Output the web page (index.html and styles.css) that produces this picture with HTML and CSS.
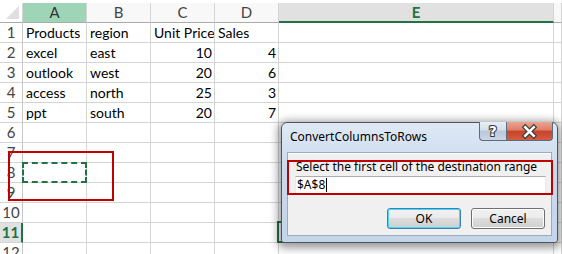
FILE: index.html
```html
<!DOCTYPE html>
<html lang="en">
<head>
  <meta charset="UTF-8">
  <title>ConvertColumnsToRows</title>
  <link rel="stylesheet" href="styles.css">
</head>
<body>
  <div class="sheet">
    <!-- Column headers -->
    <div class="row head-row">
      <div class="cell head corner"><div class="corner-mark"></div></div>
      <div class="cell head head-a">A</div>
      <div class="cell head">B</div>
      <div class="cell head">C</div>
      <div class="cell head">D</div>
      <div class="cell head head-active">E</div>
      <div class="cell head"></div>
    </div>

    <div class="row">
      <div class="cell rh">1</div>
      <div class="cell">Products</div>
      <div class="cell">region</div>
      <div class="cell">Unit Price</div>
      <div class="cell">Sales</div>
      <div class="cell"></div>
      <div class="cell"></div>
    </div>
    <div class="row">
      <div class="cell rh">2</div>
      <div class="cell">excel</div>
      <div class="cell">east</div>
      <div class="cell num">10</div>
      <div class="cell num">4</div>
      <div class="cell"></div>
      <div class="cell"></div>
    </div>
    <div class="row">
      <div class="cell rh">3</div>
      <div class="cell">outlook</div>
      <div class="cell">west</div>
      <div class="cell num">20</div>
      <div class="cell num">6</div>
      <div class="cell"></div>
      <div class="cell"></div>
    </div>
    <div class="row">
      <div class="cell rh">4</div>
      <div class="cell">access</div>
      <div class="cell">north</div>
      <div class="cell num">25</div>
      <div class="cell num">3</div>
      <div class="cell"></div>
      <div class="cell"></div>
    </div>
    <div class="row">
      <div class="cell rh">5</div>
      <div class="cell">ppt</div>
      <div class="cell">south</div>
      <div class="cell num">20</div>
      <div class="cell num">7</div>
      <div class="cell"></div>
      <div class="cell"></div>
    </div>
    <div class="row">
      <div class="cell rh">6</div>
      <div class="cell"></div><div class="cell"></div><div class="cell"></div>
      <div class="cell"></div><div class="cell"></div><div class="cell"></div>
    </div>
    <div class="row">
      <div class="cell rh">7</div>
      <div class="cell"></div><div class="cell"></div><div class="cell"></div>
      <div class="cell"></div><div class="cell"></div><div class="cell"></div>
    </div>
    <div class="row">
      <div class="cell rh">8</div>
      <div class="cell marked"><div class="marquee"></div></div>
      <div class="cell"></div><div class="cell"></div>
      <div class="cell"></div><div class="cell"></div><div class="cell"></div>
    </div>
    <div class="row">
      <div class="cell rh">9</div>
      <div class="cell"></div><div class="cell"></div><div class="cell"></div>
      <div class="cell"></div><div class="cell"></div><div class="cell"></div>
    </div>
    <div class="row">
      <div class="cell rh">10</div>
      <div class="cell"></div><div class="cell"></div><div class="cell"></div>
      <div class="cell"></div><div class="cell"></div><div class="cell"></div>
    </div>
    <div class="row">
      <div class="cell rh rh-active">11</div>
      <div class="cell"></div><div class="cell"></div><div class="cell"></div>
      <div class="cell"></div>
      <div class="cell marked"><div class="active-cell"></div></div>
      <div class="cell"></div>
    </div>
    <div class="row">
      <div class="cell rh">12</div>
      <div class="cell"></div><div class="cell"></div><div class="cell"></div>
      <div class="cell"></div><div class="cell"></div><div class="cell"></div>
    </div>

    <!-- highlight around the destination cell -->
    <div class="callout sheet-callout"></div>

    <!-- Dialog -->
    <div class="dialog">
      <div class="titlebar">
        <span class="title">ConvertColumnsToRows</span>
        <div class="caption-buttons">
          <div class="cap-btn help-btn">
            <svg width="27" height="19" viewBox="0 0 27 19">
              <text x="13.5" y="14.5" text-anchor="middle" class="help-glyph">?</text>
            </svg>
          </div>
          <div class="cap-btn close-btn">
            <svg width="47" height="19" viewBox="0 0 47 19">
              <path d="M19 5 L28 14 M28 5 L19 14" stroke="#3b3b3b" stroke-width="5" stroke-linecap="square"/>
              <path d="M19 5 L28 14 M28 5 L19 14" stroke="#ffffff" stroke-width="2.6" stroke-linecap="square"/>
            </svg>
          </div>
        </div>
      </div>
      <div class="client">
        <div class="field-label">Select the first cell of the destination range</div>
        <div class="textbox">$A$8<span class="caret"></span></div>
        <div class="dialog-buttons">
          <button class="btn btn-default">OK</button>
          <button class="btn">Cancel</button>
        </div>
      </div>
      <div class="callout dialog-callout"></div>
    </div>
  </div>
</body>
</html>
```

FILE: styles.css
```css
/* General */
body {
  margin: 0;
  background-color: #ffffff;
  font-family: 'Lato', 'Liberation Sans', sans-serif;
  overflow: hidden;
}

/* Sheet grid */
.sheet {
  position: relative;
  padding-top: 3px;
  height: 251px;
  overflow: hidden;
}

.row {
  display: grid;
  grid-template-columns: 23px 64px 64px 64px 64px 275px 1fr;
  height: 20px;
}

.head-row {
  height: 20px;
}

.cell {
  box-sizing: border-box;
  border-right: 1px solid #d4d4d4;
  border-bottom: 1px solid #d4d4d4;
  padding: 0 2px 0 3px;
  font-size: 14px;
  line-height: 19px;
  color: #000;
  white-space: nowrap;
  overflow: hidden;
}

.num {
  text-align: right;
}

.marked {
  position: relative;
  overflow: visible;
}

/* Column headers */
.head {
  background-color: #f8f8f8;
  border-bottom-color: #ababab;
  color: #444;
  font-size: 15px;
  text-align: center;
  padding: 0;
}

.corner {
  background-color: #fff;
  display: flex;
  align-items: flex-end;
  justify-content: flex-end;
  padding: 0 3px 3px 0;
}

.corner-mark {
  width: 13px;
  height: 13px;
  background-color: #dfdfdf;
  clip-path: polygon(100% 0, 100% 100%, 0 100%);
}

.head-a {
  background-color: #9fd5b7;
  color: #333;
}

.head-active {
  background-color: #e1e1e1;
  color: #217346;
  font-weight: bold;
  border-bottom: 2px solid #217346;
  line-height: 18px;
}

/* Row headers */
.rh {
  text-align: center;
  color: #444;
  font-size: 15px;
  padding: 0;
  border-right-color: #c6c6c6;
}

.rh-active {
  background-color: #e1e1e1;
  color: #217346;
  font-weight: bold;
  border-right: 2px solid #217346;
}

/* Copy marquee and active cell */
.marquee {
  position: absolute;
  left: -1px;
  top: -1px;
  right: -1px;
  bottom: -1px;
  border: 2px dashed #217346;
}

.active-cell {
  position: absolute;
  left: -2px;
  top: -2px;
  right: -1px;
  bottom: -1px;
  border: 2px solid #217346;
}

/* Red highlight boxes */
.callout {
  position: absolute;
  box-sizing: border-box;
  border: 2px solid #c00000;
}

.sheet-callout {
  left: 8px;
  top: 151px;
  width: 106px;
  height: 50px;
}

/* Dialog window */
.dialog {
  position: absolute;
  left: 281px;
  top: 122px;
  width: 277px;
  height: 121px;
  box-sizing: border-box;
  border: 1px solid #4a5563;
  border-radius: 6px 6px 3px 3px;
  background: linear-gradient(#dfe9f5, #c9d9ed 40%, #c4d5ea);
  box-shadow: 0 2px 9px 3px rgba(0, 0, 0, 0.4);
  display: flex;
  flex-direction: column;
  font-family: 'Noto Sans', 'Open Sans', sans-serif;
}

.titlebar {
  height: 29px;
  display: flex;
  justify-content: space-between;
  align-items: flex-start;
  padding: 0 4px 0 8px;
}

.title {
  font-size: 12px;
  line-height: 28px;
  color: #000;
}

.caption-buttons {
  display: flex;
  margin-top: -1px;
}

.cap-btn {
  height: 19px;
  box-sizing: border-box;
  border: 1px solid #5d6b7c;
  border-top: none;
  display: flex;
}

.help-btn {
  width: 27px;
  border-right: none;
  border-radius: 0 0 0 4px;
  background: linear-gradient(#e6eef7, #d3deea 45%, #b9c9da 50%, #c8d6e5);
}

.close-btn {
  width: 47px;
  border-radius: 0 0 4px 0;
  background: linear-gradient(#eaa491, #dd7e68 45%, #c7432b 50%, #d35c41);
}

.help-glyph {
  font-family: 'DejaVu Sans', sans-serif;
  font-size: 14px;
  font-weight: bold;
  fill: #ffffff;
  stroke: #3b3b3b;
  stroke-width: 2.2px;
  paint-order: stroke;
}

.client {
  flex: 1;
  margin: 0 5px 6px 5px;
  background-color: #f0f0f0;
  border: 1px solid #9aabbf;
  box-shadow: inset 0 1px 0 #ffffff;
  padding: 6px 5px 0 7px;
  display: flex;
  flex-direction: column;
}

.field-label {
  font-size: 12px;
  line-height: 16px;
  padding-left: 1px;
  color: #000;
}

.textbox {
  margin-top: 1px;
  height: 18px;
  box-sizing: border-box;
  background-color: #fff;
  border: 1px solid #e3e9ef;
  border-top-color: #abadb3;
  font-size: 12px;
  line-height: 16px;
  padding-left: 1px;
  display: flex;
  align-items: center;
}

.caret {
  width: 1px;
  height: 14px;
  background-color: #000;
  margin-left: 1px;
}

.dialog-buttons {
  display: flex;
  justify-content: flex-end;
  gap: 10px;
  margin-top: 14px;
  padding-right: 1px;
}

.btn {
  width: 74px;
  height: 21px;
  padding: 0;
  border: 1px solid #707070;
  border-radius: 3px;
  background: linear-gradient(#f2f2f2, #ebebeb 45%, #dddddd 50%, #cfcfcf);
  box-shadow: inset 0 0 0 1px #fcfcfc;
  font-family: 'Noto Sans', 'Open Sans', sans-serif;
  font-size: 12px;
  color: #000;
}

.btn-default {
  border-color: #3c7fb1;
  box-shadow: inset 0 0 0 1px #48d8f8;
}

.dialog-callout {
  left: 5px;
  top: 37px;
  width: 266px;
  height: 35px;
}
```
